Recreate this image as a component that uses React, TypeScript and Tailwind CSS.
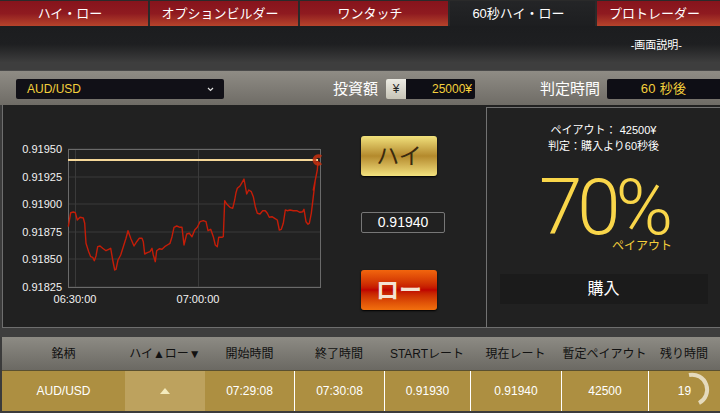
import React from 'react'

const FONT = { fontFamily: '"Liberation Sans", "Noto Sans CJK JP", sans-serif' }

// traced from the reference at 3x (x/3, 180 + y/3)
const TRACE: [number, number][] = [
  [205, 140], [212, 98], [220, 96], [226, 98], [232, 120], [240, 112], [250, 114], [254, 130],
  [258, 190], [266, 215], [272, 230], [278, 232], [283, 242], [288, 228], [293, 200], [300, 198],
  [308, 205], [318, 212], [326, 208], [332, 205], [338, 240], [344, 270], [348, 268], [354, 240],
  [362, 225], [370, 200], [378, 175], [384, 152], [392, 175], [402, 198], [410, 185], [418, 175],
  [426, 175], [430, 185], [434, 222], [442, 218], [450, 215], [456, 205], [460, 225], [466, 245],
  [470, 212], [478, 206], [486, 208], [494, 200], [502, 195], [510, 190], [516, 170], [522, 142],
  [530, 138], [540, 142], [546, 142], [552, 195], [560, 162], [568, 160], [576, 170], [584, 150],
  [592, 142], [600, 125], [610, 122], [618, 125], [624, 152], [632, 148], [640, 170], [646, 195],
  [652, 200], [656, 172], [666, 172], [670, 170], [674, 62], [680, 72], [690, 82], [698, 85],
  [704, 60], [708, 38], [712, 25], [720, 18], [726, 8], [732, -3], [740, 42], [746, 30],
  [754, 35], [760, 50], [766, 80], [772, 100], [780, 102], [788, 92], [796, 92], [802, 100],
  [808, 112], [816, 110], [824, 115], [832, 120], [838, 150], [844, 148], [850, 130], [856, 90],
  [862, 92], [870, 90], [880, 92], [890, 92], [900, 97], [908, 95], [912, 88], [918, 125],
  [924, 133], [928, 130], [934, 100], [940, 50], [946, 0], [952, -30],
]

const tabs = [
  { label: 'ハイ・ロー', w: 'w-[148px]' },
  { label: 'オプションビルダー', w: 'w-[148px]' },
  { label: 'ワンタッチ', w: 'w-[148px]' },
  { label: '60秒ハイ・ロー', w: 'w-[145px]', active: true },
  { label: 'プロトレーダー', w: 'flex-1' },
]

const cols = [
  { head: '銘柄', val: 'AUD/USD', w: 'w-[123px]' },
  { head: 'ハイ▲ロー▼', val: '', w: 'w-[80px]' },
  { head: '開始時間', val: '07:29:08', w: 'w-[89px]' },
  { head: '終了時間', val: '07:30:08', w: 'w-[90px]' },
  { head: 'STARTレート', val: '0.91930', w: 'w-[86px]' },
  { head: '現在レート', val: '0.91940', w: 'w-[91px]' },
  { head: '暫定ペイアウト', val: '42500', w: 'w-[87px]' },
  { head: '残り時間', val: '19', w: 'flex-1' },
]

function Chart() {
  const pts = TRACE.map(([x, y]) => `${(x / 3).toFixed(1)},${(180 + y / 3).toFixed(1)}`)
  pts.push('313.3,190', '317.3,170', '318,161')
  const ys = [
    { y: 149, t: '0.91950' },
    { y: 177, t: '0.91925' },
    { y: 204, t: '0.91900' },
    { y: 232, t: '0.91875' },
    { y: 259, t: '0.91850' },
    { y: 287, t: '0.91825' },
  ]
  return (
    <svg width="339" height="222" viewBox="3 105 339 222" className="shrink-0" style={FONT}>
      {ys.map((g) => (
        <g key={g.t}>
          <line x1="68" x2="320" y1={g.y} y2={g.y} stroke="#3a3a3a" strokeWidth="1" />
          <text x="62" y={g.y + 4} fill="#f2f2f2" fontSize="11" textAnchor="end">
            {g.t}
          </text>
        </g>
      ))}
      <line x1="75.5" x2="75.5" y1="149" y2="287" stroke="#3a3a3a" />
      <line x1="198.5" x2="198.5" y1="149" y2="287" stroke="#3a3a3a" />
      <rect x="68.5" y="149.5" width="252" height="138" fill="none" stroke="#6a6a6a" />
      <text x="75" y="303" fill="#f2f2f2" fontSize="11" textAnchor="middle">06:30:00</text>
      <text x="198" y="303" fill="#f2f2f2" fontSize="11" textAnchor="middle">07:00:00</text>
      <line x1="68" x2="318" y1="160" y2="160" stroke="#f6d899" strokeWidth="2" />
      <polyline points={pts.join(' ')} fill="none" stroke="#c41d08" strokeWidth="1.4" strokeLinejoin="round" />
      <path d="M321 157 A4 4 0 1 0 321 163" fill="none" stroke="#c4300f" strokeOpacity="0.85" strokeWidth="3.5" />
    </svg>
  )
}

export default function App() {
  return (
    <div className="w-[720px] h-[413px] overflow-hidden bg-[#3b3b3b] flex flex-col" style={FONT}>
      {/* tabs */}
      <div className="h-[26px] pt-px bg-[#2a2a2a] flex gap-[2px]">
        {tabs.map((t) => (
          <div
            key={t.label}
            className={`${t.w} h-full flex items-center justify-center text-[13px] text-white ${
              t.active
                ? 'bg-linear-to-b from-[#242527] to-[#1d1e20]'
                : 'bg-linear-to-b from-[#86141c] via-[#8f1a20] to-[#b6432b]'
            }`}
          >
            <span className="-ml-2">{t.label}</span>
          </div>
        ))}
      </div>

      {/* header band */}
      <div className="h-[36px] bg-linear-to-b from-[#1c1d1f] via-[#1e1f21] to-[#3d3d3d] flex items-center justify-end pr-[38px] pt-[2px]">
        <span className="text-[11px] text-white">-画面説明-</span>
      </div>

      <div className="h-[8px] bg-[#3e3e3e]" />

      {/* control bar */}
      <div className="h-[35px] border-t border-[#4a4a4a] bg-linear-to-b from-[#8f8c85] to-[#6f6c66] flex items-start pt-[8px]">
        <div className="ml-[16px] w-[208px] h-[20px] bg-[#111017] rounded-[2px] flex items-center justify-between pl-[11px] pr-[10px]">
          <span className="text-[12px] text-[#f4d03c]">AUD/USD</span>
          <svg width="7" height="5" viewBox="0 0 7 5">
            <path d="M1 1 L3.5 3.5 L6 1" fill="none" stroke="#e0e0e0" strokeWidth="1.2" />
          </svg>
        </div>
        <span className="ml-[109px] text-[15px] text-white leading-[20px]">投資額</span>
        <div className="ml-[8px] flex h-[20px] rounded-[2px] overflow-hidden">
          <div className="w-[20px] bg-linear-to-b from-[#ecebe3] to-[#c7c4b7] flex items-center justify-center text-[12px] text-[#222]">
            ¥
          </div>
          <div className="w-[69px] bg-[#0e0e15] flex items-center justify-end pr-[3px] text-[12px] text-[#f4d03c]">
            25000¥
          </div>
        </div>
        <span className="ml-[65px] text-[15px] text-white leading-[20px]">判定時間</span>
        <div className="ml-[7px] flex-1 h-[20px] bg-[#0e0e15] rounded-l-[2px] flex items-center justify-center text-[13px] text-[#f4d03c] tracking-wide">
          60 秒後
        </div>
      </div>

      {/* main */}
      <div className="h-[223px] ml-[2px] border-l border-b border-[#6e6e6e] bg-[#212121] flex">
        <Chart />
        <div className="w-[144px] flex flex-col pl-[19px] pt-[31px]">
          <div className="w-[76px] h-[40px] rounded-[3px] bg-linear-to-b from-[#f1e27c] via-[#b48a2c] to-[#f3e27e] flex items-center justify-center text-[23px] text-[#3a2a0e] shadow-[0_1px_2px_#000]">
            ハイ
          </div>
          <div className="mt-[36px] w-[84px] h-[21px] border border-[#777] rounded-[2px] flex items-center justify-center text-[14px] text-white">
            0.91940
          </div>
          <div className="mt-[37px] w-[76px] h-[40px] rounded-[3px] bg-linear-to-b from-[#f2650e] via-[#bf0200] to-[#f2700e] flex items-center justify-center text-[23px] font-bold text-[#f3e3d2] shadow-[0_1px_2px_#000]">
            ロー
          </div>
        </div>
        <div className="flex-1 mt-[2px] border-l border-t border-[#727272] flex flex-col items-center">
          <div className="mt-[15px] text-[11px] text-white leading-[14px]">ペイアウト： 42500¥</div>
          <div className="mt-[2px] text-[11px] text-white leading-[14px]">判定：購入より60秒後</div>
          <div
            className="mt-[24px] h-[62px] text-[78px] leading-[62px] text-[#f9d64a] tracking-[-5px] font-light"
            style={{ fontFamily: 'Roboto, sans-serif' }}
          >
            70%
          </div>
          <div className="self-end mr-[48px] text-[12px] leading-[14px] text-[#f4cf3b]">ペイアウト</div>
          <div className="mt-[21px] w-[208px] h-[30px] bg-[#1b1b1b] flex items-center justify-center text-[16px] text-white">
            購入
          </div>
        </div>
      </div>

      <div className="h-[9px] bg-[#3e3e3e]" />

      {/* table */}
      <div className="ml-[2px] h-[33px] bg-linear-to-b from-[#8d8b84] to-[#6b6963] flex">
        {cols.map((c) => (
          <div key={c.head} className={`${c.w} flex items-center justify-center text-[12px] text-[#111]`}>
            {c.head}
          </div>
        ))}
      </div>
      <div className="ml-[2px] h-[41px] border-t border-[#5a5030] bg-[#ad8f41] flex">
        {cols.map((c, i) => (
          <div
            key={c.head}
            className={`${c.w} relative flex items-center justify-center text-[12px] text-white ${
              i === 1 ? 'bg-[#bda25e]' : ''
            } ${i >= 3 ? 'border-l border-white' : ''}`}
          >
            {i === 1 ? (
              <svg width="10" height="6" viewBox="0 0 10 6">
                <path d="M5 0 L10 6 L0 6 Z" fill="#f4ebbd" />
              </svg>
            ) : (
              c.val
            )}
            {i === 7 && (
              <svg className="absolute left-0 top-0" width="72" height="41" viewBox="0 0 72 41">
                <path
                  d="M40 4 A15 15 0 0 1 50 32"
                  fill="none"
                  stroke="#efe8d4"
                  strokeOpacity="0.85"
                  strokeWidth="4"
                />
              </svg>
            )}
          </div>
        ))}
      </div>
    </div>
  )
}
